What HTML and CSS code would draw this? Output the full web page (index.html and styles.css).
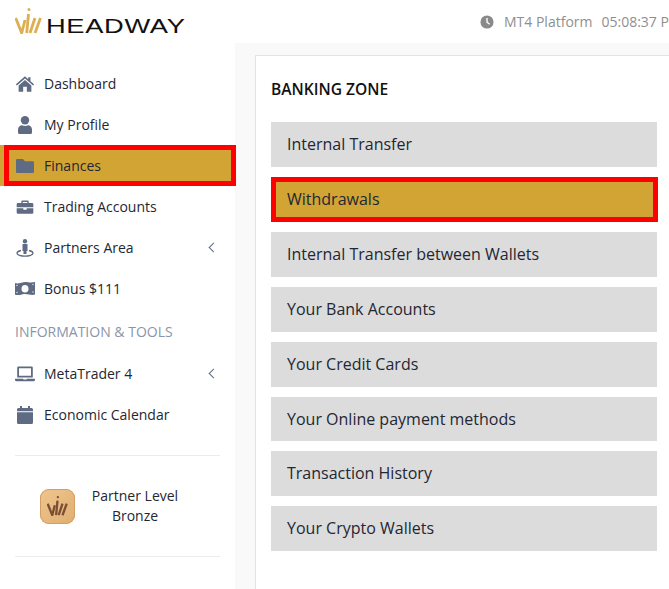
FILE: index.html
```html
<!doctype html>
<html lang="en">
    <head>
        <meta charset="UTF-8" />
        <meta name="viewport" content="width=device-width, initial-scale=1.0" />
        <title>Banking Zone</title>
        <link rel="stylesheet" href="styles.css">
    </head>
    <body>
        <header class="topbar">
            <a class="logo" href="#">
                <svg class="logo-mark" viewBox="0 0 27 26" width="27" height="26">
                    <circle cx="14" cy="1.5" r="1.5" fill="#dcaf52" />
                    <g fill="none" stroke="#dcaf52" stroke-width="2.8">
                        <path d="M0.7 10 L6.7 25 L10 12" />
                        <path d="M13.5 6 L11.7 25" />
                        <path d="M20 10 L15 25" />
                        <path d="M25.5 10 L20 25" />
                    </g>
                </svg>
                <span class="logo-text">HEADWAY</span>
            </a>
            <div class="platform">
                <svg class="clock" viewBox="0 0 16 16" width="14" height="14">
                    <circle cx="8" cy="8" r="7.5" fill="#8a8a8a" />
                    <path d="M8 3.5 V8.3 L11 10.6" fill="none" stroke="#fff" stroke-width="1.6" />
                </svg>
                <span class="platform-name">MT4 Platform</span>
                <span>05:08:37 PM</span>
            </div>
        </header>

        <div class="layout">
            <aside class="sidebar">
                <ul class="menu">
                    <li class="menu-item">
                        <svg class="icon" viewBox="-1 -1 22 19.8"><path d="M10 0.5 L13.5 3.6 V1.5 H16 V5.8 L20 9.3 L18.9 10.6 L10 2.9 L1.1 10.6 L0 9.3 Z M10 4.5 L17 10.6 V17.5 H12 V12 H8 V17.5 H3 V10.6 Z" /></svg>
                        Dashboard
                    </li>
                    <li class="menu-item">
                        <svg class="icon" viewBox="0 0 20 18"><circle cx="10" cy="4.2" r="4.2" /><path d="M3 16.500 V13.500 C3 11 5 9.300 7 9.300 C8.500 10.300 11.500 10.300 13 9.300 C15 9.300 17 11 17 13.500 V16.500 Q17 18 15.500 18 H4.500 Q3 18 3 16.500 Z" /></svg>
                        My Profile
                    </li>
                    <li class="menu-item menu-item-active">
                        <svg class="icon" viewBox="0 0 20 18"><path d="M2 2 H8 L10 4.3 H18 Q19 4.3 19 5.3 V15 Q19 16 18 16 H2 Q1 16 1 15 V3 Q1 2 2 2 Z" /></svg>
                        Finances
                    </li>
                    <li class="menu-item">
                        <svg class="icon" viewBox="-2 -2 24 21.6"><path d="M7 1 H13 Q14.5 1 14.5 2.5 V4 H18.5 Q20 4 20 5.5 V9 H0 V5.5 Q0 4 1.5 4 H5.5 V2.5 Q5.5 1 7 1 Z M7.2 2.7 V4 H12.8 V2.7 Z M0 10.2 H8 V12 H12 V10.2 H20 V15.5 Q20 17 18.5 17 H1.5 Q0 17 0 15.5 Z" fill-rule="evenodd" /></svg>
                        Trading Accounts
                    </li>
                    <li class="menu-item">
                        <svg class="icon" viewBox="0 0 20 18"><circle cx="10" cy="2.2" r="2.2" /><path d="M7.5 5 H12.5 V12 H11.5 V15 H8.5 V12 H7.5 Z" /><path d="M6 11.5 C3 12.2 2 13.2 2 14.2 C2 16 6 17.2 10 17.2 C14 17.2 18 16 18 14.2 C18 13.2 17 12.2 14 11.5" fill="none" stroke="#5f6b82" stroke-width="1.3" /></svg>
                        Partners Area
                        <span class="chevron"></span>
                    </li>
                    <li class="menu-item">
                        <svg class="icon" viewBox="0 0 20 18">
                            <path d="M0 3 C4 4.5 8 1 13 2.2 C15.5 2.7 18 2.5 20 2 V14.5 C16 16 12 13 7 14.5 C4.5 15.2 2 15.2 0 14.8 Z M10 5 A3.5 3.8 0 1 0 10 12.6 A3.5 3.8 0 1 0 10 5 Z" fill-rule="evenodd" />
                            <g fill="#cfd3da">
                                <circle cx="2" cy="5.5" r="0.8" />
                                <circle cx="2" cy="12.5" r="0.8" />
                                <circle cx="18" cy="4.5" r="0.8" />
                                <circle cx="18" cy="12" r="0.8" />
                            </g>
                        </svg>
                        Bonus $111
                    </li>
                </ul>

                <h4 class="menu-title">INFORMATION &amp; TOOLS</h4>

                <ul class="menu">
                    <li class="menu-item">
                        <svg class="icon" viewBox="0 0 20 18"><path d="M3.5 1.5 H16.5 Q17.8 1.5 17.8 2.8 V12.5 H2.2 V2.8 Q2.2 1.5 3.5 1.5 Z M4 3.2 V10.8 H16 V3.2 Z M0 13.8 H8 L8.5 14.5 H11.5 L12 13.8 H20 V14.8 Q20 16.3 18.5 16.3 H1.5 Q0 16.3 0 14.8 Z" fill-rule="evenodd" /></svg>
                        MetaTrader 4
                        <span class="chevron"></span>
                    </li>
                    <li class="menu-item">
                        <svg class="icon" viewBox="0 0 20 18"><path d="M5 0 H7 V2 H13 V0 H15 V2 H16.5 Q18 2 18 3.5 V5.2 H2 V3.5 Q2 2 3.5 2 H5 Z M2 6.3 H18 V16.5 Q18 18 16.5 18 H3.5 Q2 18 2 16.5 Z" /></svg>
                        Economic Calendar
                    </li>
                </ul>

                <div class="partner">
                    <div class="partner-badge">
                        <svg viewBox="0 0 27 26" width="21" height="20">
                            <circle cx="14" cy="1.5" r="1.5" fill="#7a4f36" />
                            <g fill="none" stroke="#7a4f36" stroke-width="3">
                                <path d="M0.7 10 L6.7 25 L10 12" />
                                <path d="M13.5 6 L11.7 25" />
                                <path d="M20 10 L15 25" />
                                <path d="M25.5 10 L20 25" />
                            </g>
                        </svg>
                    </div>
                    <div class="partner-text">Partner Level<br />Bronze</div>
                </div>
            </aside>

            <main class="content">
                <section class="panel">
                    <h2 class="panel-title">BANKING ZONE</h2>
                    <a class="bank-link" href="#">Internal Transfer</a>
                    <a class="bank-link bank-link-active" href="#">Withdrawals</a>
                    <a class="bank-link" href="#">Internal Transfer between Wallets</a>
                    <a class="bank-link" href="#">Your Bank Accounts</a>
                    <a class="bank-link" href="#">Your Credit Cards</a>
                    <a class="bank-link" href="#">Your Online payment methods</a>
                    <a class="bank-link" href="#">Transaction History</a>
                    <a class="bank-link" href="#">Your Crypto Wallets</a>
                </section>
            </main>
        </div>
    </body>
</html>
```

FILE: styles.css
```css
html,
body {
    height: 100%;
}
body {
    margin: 0;
    overflow: hidden;
    font-family: "Open Sans", Arial, sans-serif;
    font-size: 14px;
    color: #1f2733;
    background: #fff;
}
.topbar {
    display: flex;
    justify-content: space-between;
    align-items: center;
    height: 43px;
    padding-left: 15px;
}
.logo {
    display: flex;
    align-items: center;
    gap: 4px;
    margin-top: 8px;
    color: #111;
    text-decoration: none;
}
.logo-mark {
    flex: none;
    margin-bottom: 10px;
}
.logo-text {
    display: inline-block;
    width: 107px;
    font-family: "Liberation Sans", Arial, sans-serif;
    font-size: 21px;
    line-height: 24px;
    letter-spacing: 0.5px;
    white-space: nowrap;
    transform: scaleX(1.3);
    transform-origin: left center;
}
.platform {
    display: flex;
    align-items: center;
    flex: none;
    width: 189px;
    overflow: hidden;
    white-space: nowrap;
    color: #8f8f8f;
}
.clock {
    flex: none;
    margin-right: 10px;
}
.platform-name {
    margin-right: 9px;
}
.layout {
    display: flex;
    height: 546px;
}
.sidebar {
    flex: none;
    width: 205px;
    padding: 20px 15px 0;
}
.menu {
    margin: 0;
    padding: 0;
    list-style: none;
}
.menu-item {
    position: relative;
    display: flex;
    align-items: center;
    height: 41px;
    gap: 9px;
}
.menu-item-active {
    margin: 0 -15px;
    padding: 0 15px;
    background: #d1a434;
}
.menu-item-active::after {
    content: "";
    position: absolute;
    top: 0;
    left: 4px;
    right: -1px;
    bottom: 0;
    border: 5px solid #f00;
}
.icon {
    flex: none;
    width: 20px;
    height: 18px;
    fill: #5f6b82;
}
.chevron {
    position: absolute;
    right: 3px;
    top: 17px;
    width: 6px;
    height: 6px;
    border-left: 1.5px solid #5f6b82;
    border-bottom: 1.5px solid #5f6b82;
    transform: rotate(45deg);
}
.menu-title {
    margin: 13px 0 11px;
    font-size: 14px;
    line-height: 20px;
    font-weight: 400;
    color: #8b95a8;
}
.partner {
    display: flex;
    align-items: center;
    justify-content: center;
    gap: 17px;
    height: 100px;
    margin-top: 20px;
    padding-right: 17px;
    border-top: 1px solid #ececec;
    border-bottom: 1px solid #ececec;
    text-align: center;
    line-height: 20px;
}
.partner-badge {
    display: flex;
    align-items: center;
    justify-content: center;
    width: 35px;
    height: 35px;
    border-radius: 9px;
    background: linear-gradient(135deg, #efc68f, #e0ae70);
    box-shadow: inset 0 0 0 1px #d29f63;
}
.content {
    flex: 1;
    padding: 12px 0 0 20px;
    background: #f9f9f9;
}
.panel {
    height: 100%;
    padding: 22px 12px 0 15px;
    background: #fff;
    border-top: 1px solid #e3e3e3;
    border-left: 1px solid #e3e3e3;
}
.panel-title {
    margin: 0 0 22.3px;
    font-size: 15.6px;
    line-height: 22px;
    font-weight: 600;
    color: #111;
}
.bank-link {
    display: block;
    margin-bottom: 10px;
    padding: 11px 16px;
    font-size: 16px;
    line-height: 22.85px;
    color: #1f2733;
    text-decoration: none;
    background: #dcdcdc;
}
.bank-link-active {
    background: #d1a434;
    outline: 5px solid #f00;
    outline-offset: -5px;
    margin-right: -1px;
}
```
